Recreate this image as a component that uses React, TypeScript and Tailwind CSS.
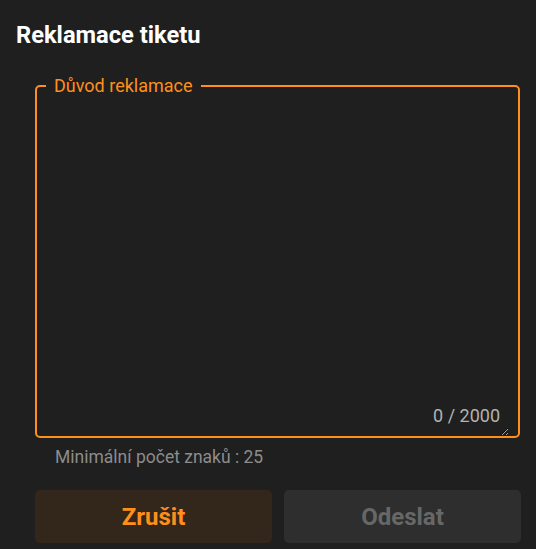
export default function App() {
  return (
    <div className="w-[536px] h-[549px] overflow-hidden bg-[#1f1f1f] font-['Roboto',sans-serif]">
      <h2 className="pl-4 pt-[21px] text-[23.7px] leading-[28px] font-bold text-white">
        Reklamace tiketu
      </h2>

      <div className="pl-[35px] pr-[15px] mt-[28px]">
        <fieldset className="relative mr-[1px] rounded-[5px] border-2 border-[#ff8f1c] px-[9px]">
          <legend className="px-[8px] text-[18px] leading-[18px] text-[#ff8f1c]">
            Důvod reklamace
          </legend>
          <textarea
            className="block w-full h-[341px] bg-transparent text-[18px] text-white outline-none"
            aria-label="Důvod reklamace"
          />
          <span className="absolute right-[18px] bottom-[9px] text-[18px] leading-[22px] text-[#b3b3b3]">
            0 / 2000
          </span>
        </fieldset>

        <p className="pl-[20px] mt-[7px] text-[17.5px] leading-[24px] text-[#8c8c8c]">
          Minimální počet znaků : 25
        </p>

        <div className="mt-[21px] flex gap-3">
          <button className="flex-1 h-[53px] rounded-[5px] bg-[#33261a] text-[24px] font-bold text-[#ff8f1c]">
            Zrušit
          </button>
          <button
            disabled
            className="flex-1 h-[53px] rounded-[5px] bg-[#2e2e2e] text-[24px] font-bold text-[#676767]"
          >
            Odeslat
          </button>
        </div>
      </div>
    </div>
  );
}
